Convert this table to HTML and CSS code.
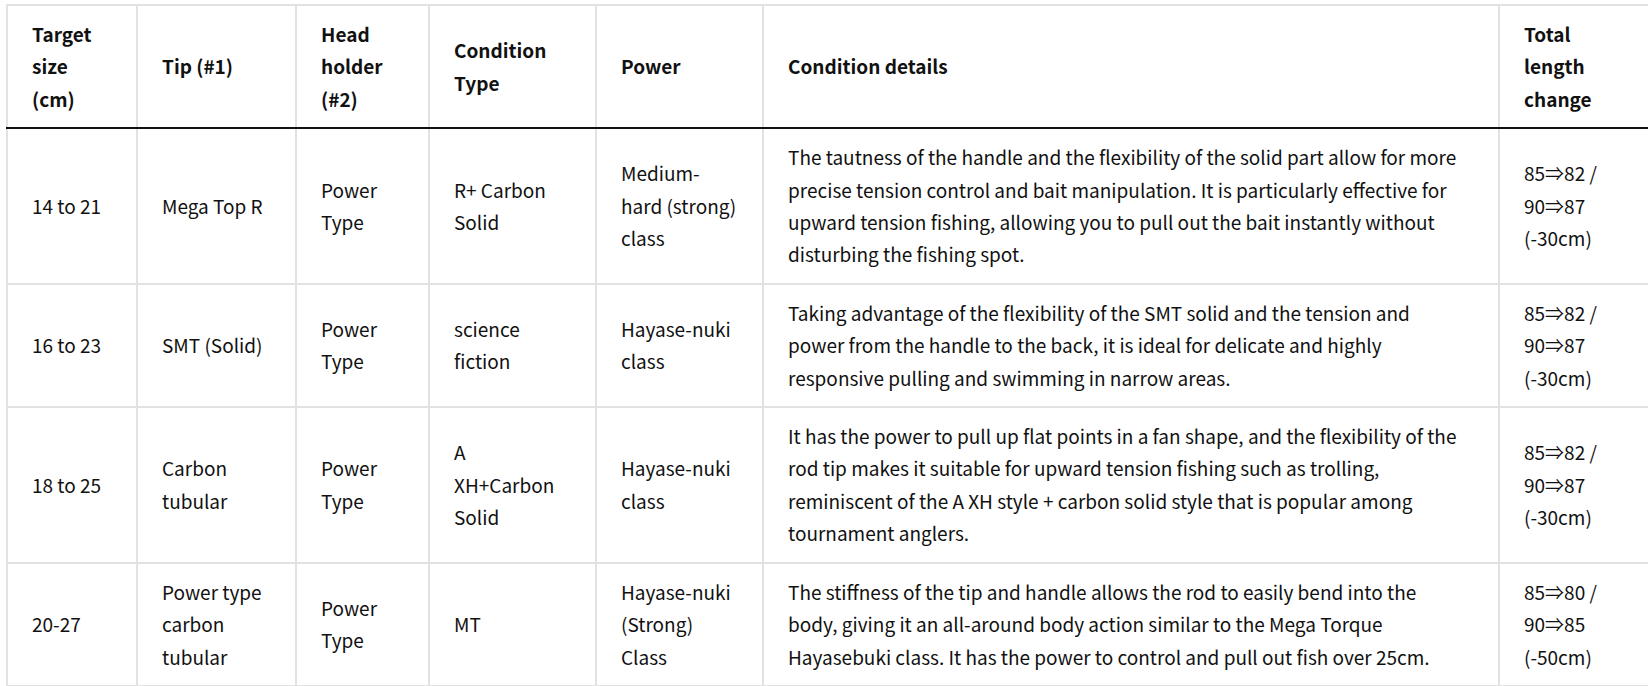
FILE: index.html
```html
<!DOCTYPE html>
<html lang="en">
<head>
<meta charset="utf-8">
<title>Tip and head holder combinations</title>
<link rel="stylesheet" href="styles.css">
</head>
<body>
<div class="wrap">
<table class="spec">
  <colgroup>
    <col class="c1"><col class="c2"><col class="c3"><col class="c4"><col class="c5"><col class="c6"><col class="c7">
  </colgroup>
  <thead>
    <tr>
      <th>Target size (cm)</th>
      <th>Tip (#1)</th>
      <th>Head holder (#2)</th>
      <th>Condition Type</th>
      <th>Power</th>
      <th>Condition details</th>
      <th>Total length change</th>
    </tr>
  </thead>
  <tbody>
    <tr>
      <td>14 to 21</td>
      <td>Mega Top R</td>
      <td>Power Type</td>
      <td>R+ Carbon Solid</td>
      <td>Medium-hard (strong) class</td>
      <td>The tautness of the handle and the flexibility of the solid part allow for more<br>precise tension control and bait manipulation. It is particularly effective for<br>upward tension fishing, allowing you to pull out the bait instantly without<br>disturbing the fishing spot.</td>
      <td>85⇒82 / 90⇒87 (-30cm)</td>
    </tr>
    <tr>
      <td>16 to 23</td>
      <td>SMT (Solid)</td>
      <td>Power Type</td>
      <td>science fiction</td>
      <td>Hayase-nuki class</td>
      <td>Taking advantage of the flexibility of the SMT solid and the tension and<br>power from the handle to the back, it is ideal for delicate and highly<br>responsive pulling and swimming in narrow areas.</td>
      <td>85⇒82 / 90⇒87 (-30cm)</td>
    </tr>
    <tr>
      <td>18 to 25</td>
      <td>Carbon tubular</td>
      <td>Power Type</td>
      <td>A<br>XH+Carbon Solid</td>
      <td>Hayase-nuki class</td>
      <td>It has the power to pull up flat points in a fan shape, and the flexibility of the<br>rod tip makes it suitable for upward tension fishing such as trolling,<br>reminiscent of the A XH style + carbon solid style that is popular among<br>tournament anglers.</td>
      <td>85⇒82 / 90⇒87 (-30cm)</td>
    </tr>
    <tr>
      <td>20-27</td>
      <td>Power type carbon tubular</td>
      <td>Power Type</td>
      <td>MT</td>
      <td>Hayase-nuki (Strong) Class</td>
      <td>The stiffness of the tip and handle allows the rod to easily bend into the<br>body, giving it an all-around body action similar to the Mega Torque<br>Hayasebuki class. It has the power to control and pull out fish over 25cm.</td>
      <td>85⇒80 / 90⇒85 (-50cm)</td>
    </tr>
  </tbody>
</table>
</div>
</body>
</html>
```

FILE: styles.css
```css
html, body {
  margin: 0;
  padding: 0;
  background: #fff;
}

body {
  font-family: "Noto Sans CJK JP", "Noto Sans", sans-serif;
  font-size: 19px;
  line-height: 32.4px;
  color: #111;
}

.wrap {
  padding: 4px 0 0 6px;
}

.spec {
  width: 1642px;
  table-layout: fixed;
  border-collapse: collapse;
  border: 2px solid #e2e2e2;
}

.c1 { width: 130px; }
.c2 { width: 159px; }
.c3 { width: 133px; }
.c4 { width: 167px; }
.c5 { width: 167px; }
.c6 { width: 736px; }
.c7 { width: 150px; }

.spec th,
.spec td {
  border: 2px solid #e2e2e2;
  padding: 12px 24px;
  text-align: left;
  vertical-align: middle;
}

.spec th {
  font-weight: 700;
  border-bottom: 2px solid #111;
}
```
